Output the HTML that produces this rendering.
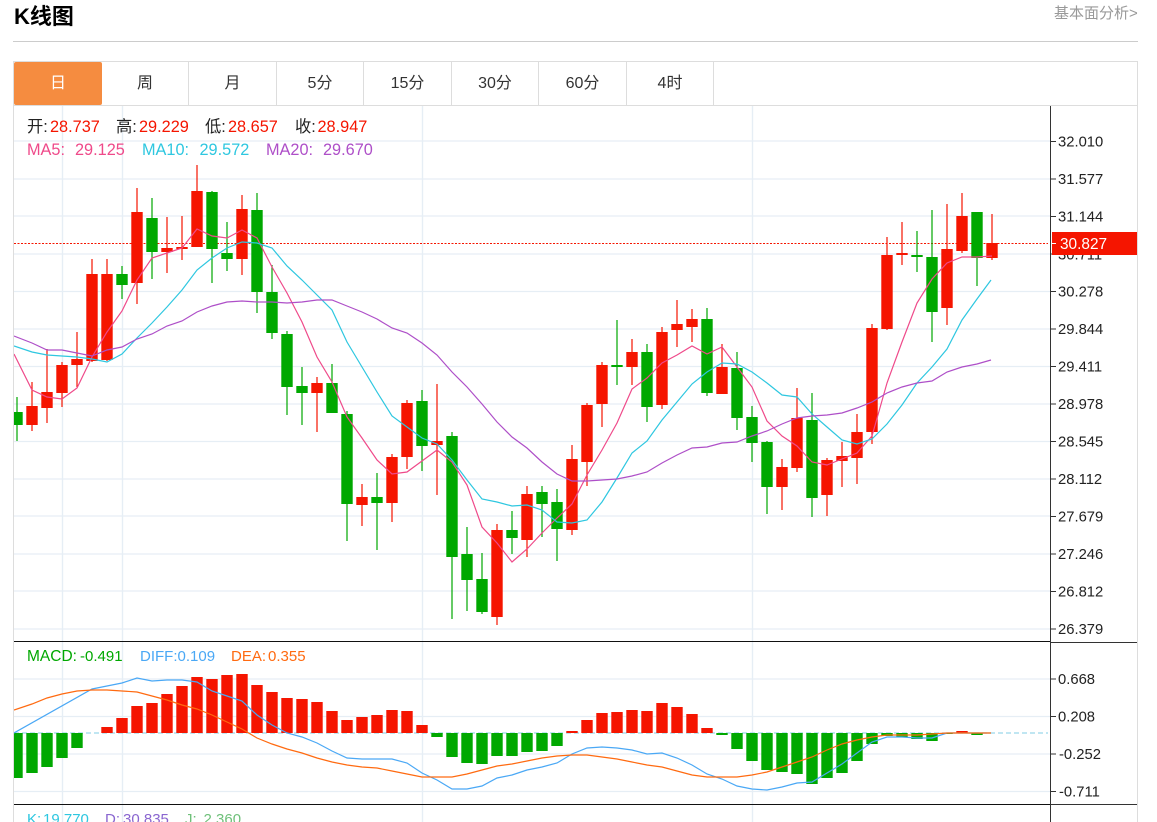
<!DOCTYPE html>
<html lang="zh">
<head>
<meta charset="utf-8">
<title>K线图</title>
<style>
html,body{margin:0;padding:0;background:#fff;width:1157px;height:822px;overflow:hidden}
body{position:relative;font-family:"Liberation Sans","Noto Sans CJK SC",sans-serif}
h1{position:absolute;left:14px;top:4px;margin:0;font-size:22px;line-height:26px;font-weight:700;color:#000}
.more{position:absolute;left:1054px;top:5px;font-size:15px;line-height:18px;color:#999;white-space:nowrap}
.rule{position:absolute;left:13px;top:41px;width:1125px;height:1px;background:#ccc}
.box{position:absolute;left:13px;top:61px;width:1123px;height:761px;border:1px solid #ddd;border-bottom:0;box-sizing:content-box}
.tabs{position:absolute;left:14px;top:62px;width:1123px;height:43px;border-bottom:1px solid #ddd}
.tab{position:absolute;top:0;height:43px;line-height:44px;text-align:center;font-size:16px;color:#333;border-right:1px solid #ddd;box-sizing:border-box}
.on{background:#f58c40;color:#fff;border-right:0;border-radius:2px}
svg{position:absolute;left:0;top:0}
text{font-family:"Liberation Sans","Noto Sans CJK SC",sans-serif}
</style>
</head>
<body>
<h1>K线图</h1>
<div class="more">基本面分析&gt;</div>
<div class="rule"></div>
<div class="box"></div>
<div class="tabs">
<div class="tab on" style="left:0;width:88px">日</div>
<div class="tab" style="left:88px;width:87px">周</div>
<div class="tab" style="left:175px;width:88px">月</div>
<div class="tab" style="left:263px;width:87px">5分</div>
<div class="tab" style="left:350px;width:88px">15分</div>
<div class="tab" style="left:438px;width:87px">30分</div>
<div class="tab" style="left:525px;width:88px">60分</div>
<div class="tab" style="left:613px;width:87px">4时</div>
</div>
<svg width="1157" height="822" viewBox="0 0 1157 822">
<defs><clipPath id="c"><rect x="14" y="106" width="1036" height="716"/></clipPath></defs>
<!-- grid -->
<path fill="none" stroke="#e6eef5" stroke-width="1.2" d="M14 141H1050M14 179H1050M14 216H1050M14 254H1050M14 291.5H1050M14 329H1050M14 366.5H1050M14 404H1050M14 441.5H1050M14 479H1050M14 516H1050M14 554H1050M14 591H1050M14 629H1050M14 679H1050M14 716.5H1050M14 754H1050M14 791.5H1050"/>
<path fill="none" stroke="#e6eef5" stroke-width="1.4" d="M62.5 106V822M122.5 106V822M422.5 106V822M752.5 106V822"/>
<!-- current price line -->
<path fill="none" stroke="#f51500" stroke-width="1" stroke-dasharray="2 1.5" d="M14 243.5H1048"/>
<g clip-path="url(#c)" fill="none">
<!-- candle wicks -->
<path stroke="#f51500" stroke-width="1.2" d="M32 382V431M47 349V423M62 362V407M77 332V387M92 259V362M107 259V361M137 188V304M167 217V273M182 216V260M197 165V247M242 195V275M317 377V432M362 484V526M392 454V522M407 400V469M437 384V495M497 524V625M527 486V557M572 445V535M587 403V486M602 362V427M632 339V385M662 327V409M677 300V347M692 309V342M722 344V394M782 459V510M797 388V472M827 458V516M842 442V487M857 414V484M872 324V444M887 237V330M902 222V265M947 204V325M962 193V253M992 214V260"/>
<path stroke="#00a800" stroke-width="1.2" d="M17 397V441M122 266V299M152 198V279M212 191V283M227 222V271M257 193V313M272 265V339M287 331V415M302 367V425M332 364V413M347 411V541M377 473V550M422 390V471M452 432V619M467 527V611M482 553V614M512 511V554M542 486V537M557 489V561M617 320V385M647 344V422M707 308V396M737 352V430M752 406V462M767 441V514M812 393V517M917 231V272M932 210V342M977 212V286"/>
<!-- candle bodies -->
<path stroke="#f51500" stroke-width="11.4" d="M32 406V425M47 392V408M62 365V393M77 359V365M92 274V361M107 274V360M137 212V283M167 248V252M182 247V249M197 191V247M242 209V259M317 383V393M362 497V505M392 457V503M407 403V457M437 441V445M497 530V617M527 494V540M572 459V530M587 405V462M602 365V404M632 352V367M662 332V405M677 324V330M692 319V327M722 367V394M782 467V487M797 418V468M827 460V495M842 456V461M857 432V458M872 328V432M887 255V329M902 253V255M947 249V308M962 216V251M992 243V258"/>
<path stroke="#00a800" stroke-width="11.4" d="M17 412V425M122 274V285M152 218V252M212 192V249M227 253V259M257 210V292M272 292V333M287 334V387M302 386V393M332 383V413M347 414V504M377 497V503M422 401V446M452 436V557M467 554V580M482 579V612M512 530V538M542 492V504M557 502V529M617 365V367M647 352V407M707 319V393M737 368V418M752 417V443M767 442V487M812 420V498M917 255V257M932 257V312M977 212V258"/>
<!-- MA lines -->
<polyline stroke="#ef4a8a" stroke-width="1.2" points="14,354 32,390 47,397 62,399 77,388 92,357 107,332 122,311 137,280 152,258 167,253 182,248 197,229 212,236 227,238 242,230 257,238 272,267 287,293 302,322 317,357 332,382 347,417 362,438 377,460 392,474 407,472 422,461 437,450 452,462 467,485 482,527 497,543 512,562 527,549 542,533 557,518 572,504 587,475 602,450 617,423 632,389 647,378 662,363 677,355 692,346 707,354 722,347 737,367 752,387 767,421 782,436 797,446 812,462 827,465 842,459 857,453 872,436 887,383 902,342 917,303 932,279 947,263 962,257 977,257 992,256"/>
<polyline stroke="#2ec7e0" stroke-width="1.2" points="14,346 32,352 47,355 62,356 77,357 92,359 107,362 122,354 137,338 152,323 167,307 182,290 197,270 212,258 227,248 242,242 257,243 272,248 287,266 302,280 317,295 332,310 347,342 362,367 377,392 392,416 407,427 422,438 437,444 452,460 467,480 482,499 497,502 512,506 527,505 542,510 557,522 572,523 587,520 602,502 617,478 632,453 647,441 662,420 677,402 692,384 707,372 722,363 737,364 752,372 767,383 782,395 797,397 812,414 827,427 842,440 857,444 872,439 887,424 902,405 917,383 932,367 947,349 962,320 977,299 991,280"/>
<polyline stroke="#ae4fc8" stroke-width="1.2" points="14,336 32,343 47,350 62,350 77,353 92,356 107,350 122,347 137,339 152,334 167,326 182,321 197,312 212,306 227,302 242,301 257,302 272,302 287,303 302,302 317,300 332,300 347,306 362,312 377,319 392,328 407,333 422,343 437,355 452,372 467,387 482,404 497,422 512,437 527,448 542,462 557,474 572,481 587,481 602,480 617,479 632,476 647,472 662,463 677,455 692,448 707,447 722,443 737,442 752,436 767,431 782,424 797,418 812,416 827,415 842,413 857,408 872,402 887,393 902,387 917,383 932,381 947,372 962,367 977,364 991,360"/>
<!-- MACD -->
<path stroke="#9bd6ea" stroke-width="1.2" stroke-dasharray="5 3" d="M14 733H1048"/>
<path stroke="#f51500" stroke-width="11.4" d="M107 727V733M122 718V733M137 706V733M152 703V733M167 694V733M182 686V733M197 677V733M212 679V733M227 675V733M242 674V733M257 685V733M272 692V733M287 698V733M302 699V733M317 702V733M332 711V733M347 720V733M362 717V733M377 715V733M392 710V733M407 711V733M422 725V733M572 731V733M587 720V733M602 713V733M617 712V733M632 710V733M647 711V733M662 703V733M677 707V733M692 714V733M707 728V733M962 731V733"/>
<path stroke="#00a800" stroke-width="11.4" d="M17 733V778M32 733V773M47 733V767M62 733V758M77 733V748M437 733V737M452 733V757M467 733V763M482 733V764M497 733V756M512 733V756M527 733V752M542 733V751M557 733V746M722 733V735M737 733V749M752 733V761M767 733V770M782 733V772M797 733V774M812 733V784M827 733V778M842 733V773M857 733V761M872 733V744M887 733V736M902 733V737M917 733V739M932 733V741M947 733V734M977 733V735"/>
<polyline stroke="#4aa8f5" stroke-width="1.2" points="14,733 92,689 122,683 137,678 152,681 167,680 182,680 197,682 212,691 227,696 242,701 257,715 272,725 287,733 302,737 317,743 332,751 347,758 362,759 377,759 392,759 407,763 422,773 437,780 452,789 467,789 482,786 497,778 512,775 527,770 542,767 557,763 572,754 587,748 602,747 617,748 632,750 647,754 662,753 677,758 692,765 707,774 722,779 737,786 752,789 767,790 782,787 797,783 812,782 827,773 842,764 857,753 872,742 887,737 902,737 917,738 932,738 947,733 962,733 977,733 991,733"/>
<polyline stroke="#ff6a10" stroke-width="1.2" points="14,710 32,704 47,698 62,694 77,691 92,690 107,690 122,691 137,692 152,696 167,700 182,705 197,709 212,715 227,722 242,729 257,738 272,744 287,749 302,753 317,758 332,762 347,765 362,767 377,768 392,771 407,774 422,777 437,777 452,777 467,774 482,770 497,766 512,764 527,761 542,758 557,756 572,755 587,755 602,757 617,759 632,762 647,765 662,767 677,771 692,775 707,777 722,777 737,777 752,775 767,772 782,767 797,762 812,757 827,750 842,744 857,740 872,737 887,735 902,735 917,735 932,734 947,733 962,733 977,733 991,733"/>
</g>
<!-- axis -->
<path fill="none" stroke="#333" stroke-width="1" d="M1050.5 106V822M1051 141.5H1056M1051 179H1056M1051 216.5H1056M1051 254H1056M1051 291.5H1056M1051 329H1056M1051 366.5H1056M1051 404H1056M1051 441.5H1056M1051 479H1056M1051 516.5H1056M1051 554H1056M1051 591.5H1056M1051 629H1056M1051 679H1056M1051 716.5H1056M1051 754H1056M1051 791.5H1056"/>
<path fill="none" stroke="#111" stroke-width="1" d="M14 641.5H1050M14 804.5H1050"/>
<path fill="none" stroke="#333" stroke-width="1" d="M1050 642.5H1137M1050 804.5H1137"/>
<g font-size="14.8" fill="#222">
<text x="1058" y="146.5">32.010</text>
<text x="1058" y="184">31.577</text>
<text x="1058" y="221.5">31.144</text>
<text x="1058" y="259.5">30.711</text>
<text x="1058" y="296.5">30.278</text>
<text x="1058" y="334">29.844</text>
<text x="1058" y="371.5">29.411</text>
<text x="1058" y="409">28.978</text>
<text x="1058" y="446.5">28.545</text>
<text x="1058" y="484">28.112</text>
<text x="1058" y="521.5">27.679</text>
<text x="1058" y="559">27.246</text>
<text x="1058" y="596.5">26.812</text>
<text x="1058" y="634">26.379</text>
<text x="1058" y="684">0.668</text>
<text x="1058" y="721.5">0.208</text>
<text x="1059" y="759">-0.252</text>
<text x="1059" y="796.5">-0.711</text>
</g>
<rect x="1052" y="232" width="85" height="23" fill="#f51500"/>
<path stroke="#fff" stroke-width="1" d="M1051 243.5H1056"/>
<text x="1060" y="249" font-size="15.4" fill="#fff">30.827</text>
<!-- legends -->
<g font-size="16.3">
<text x="27" y="132" fill="#222">开:</text><text x="50" y="132" fill="#f51500">28.737</text>
<text x="116" y="132" fill="#222">高:</text><text x="139" y="132" fill="#f51500">29.229</text>
<text x="205" y="132" fill="#222">低:</text><text x="228" y="132" fill="#f51500">28.657</text>
<text x="295" y="132" fill="#222">收:</text><text x="317.5" y="132" fill="#f51500">28.947</text>
<text x="27" y="155" fill="#ef4a8a">MA5:</text><text x="75" y="155" fill="#ef4a8a">29.125</text>
<text x="142" y="155" fill="#2ec7e0">MA10:</text><text x="199.5" y="155" fill="#2ec7e0">29.572</text>
<text x="266" y="155" fill="#ae4fc8">MA20:</text><text x="323" y="155" fill="#ae4fc8">29.670</text>
</g>
<g font-size="15">
<text x="27" y="661" fill="#00a800" font-size="15.5">MACD:</text><text x="80" y="661" fill="#00a800">-0.491</text>
<text x="140" y="661" fill="#4aa8f5">DIFF:</text><text x="177.5" y="661" fill="#4aa8f5">0.109</text>
<text x="231" y="661" fill="#ff6a10">DEA:</text><text x="268" y="661" fill="#ff6a10">0.355</text>
<text x="27" y="824" fill="#2ec7e0">K:</text><text x="43" y="824" fill="#2ec7e0">19.770</text>
<text x="105" y="824" fill="#8a66d0">D:</text><text x="123" y="824" fill="#8a66d0">30.835</text>
<text x="185" y="824" fill="#6fc07a">J:</text><text x="203.5" y="824" fill="#6fc07a">2.360</text>
</g>
</svg>
</body>
</html>
